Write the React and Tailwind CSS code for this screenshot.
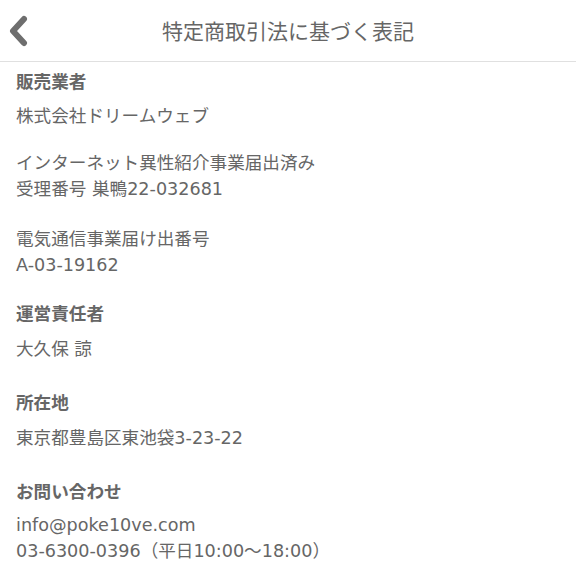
export default function App() {
  const font = { fontFamily: '"Noto Sans CJK JP", sans-serif' };
  const body = { fontFamily: '"DejaVu Sans", "Noto Sans CJK JP", sans-serif' };
  return (
    <div className="w-[576px] h-[576px] bg-white overflow-hidden text-[#666]" style={font}>
      <div className="relative h-[62px] border-b border-[#e0e0e0] flex items-center justify-center">
        <svg className="absolute left-[5px] top-[15px]" width="26" height="32" viewBox="0 0 26 32">
          <polyline points="19,4 8,16 19,28" fill="none" stroke="#6e6e6e" strokeWidth="6" strokeLinecap="round" strokeLinejoin="round" />
        </svg>
        <div className="text-[21px] leading-[26px] text-[#666] -mt-[1px]">特定商取引法に基づく表記</div>
      </div>
      <div className="pl-[16px] text-[17.6px] leading-[26px]" style={body}>
        <div className="mt-[7px] font-bold">販売業者</div>
        <div className="mt-[8px]">株式会社ドリームウェブ</div>
        <div className="mt-[21px]">
          <div>インターネット異性紹介事業届出済み</div>
          <div>受理番号 巣鴨22-032681</div>
        </div>
        <div className="mt-[24px]">
          <div>電気通信事業届け出番号</div>
          <div>A-03-19162</div>
        </div>
        <div className="mt-[23px] font-bold">運営責任者</div>
        <div className="mt-[9px]">大久保 諒</div>
        <div className="mt-[28px] font-bold">所在地</div>
        <div className="mt-[9px]">東京都豊島区東池袋3-23-22</div>
        <div className="mt-[28px] font-bold">お問い合わせ</div>
        <div className="mt-[7px]">
          <div>info@poke10ve.com</div>
          <div>03-6300-0396（平日10:00〜18:00）</div>
        </div>
      </div>
    </div>
  );
}
